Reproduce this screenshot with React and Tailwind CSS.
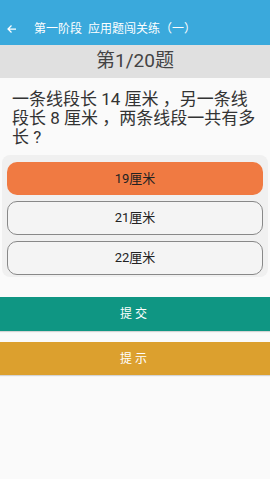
export default function App() {
  const font = { fontFamily: 'Roboto, "Noto Sans CJK SC", sans-serif' };
  return (
    <div className="w-[270px] h-[479px] bg-[#fafafa] flex flex-col" style={font}>
      <div className="h-[45px] bg-[#3aa9dc] flex items-end pb-[8px] pl-[6px]">
        <svg width="12" height="12" viewBox="0 0 24 24" className="mb-[2px]" fill="none" stroke="white" strokeWidth="2.5">
          <path d="M20 12H5M11 5l-7 7 7 7" />
        </svg>
        <span className="ml-[16px] text-white text-[12px] leading-[16px]">第一阶段&nbsp;&nbsp;应用题闯关练（一）</span>
      </div>
      <div className="h-[33px] bg-[#e0e0e0] flex items-center justify-center text-[19px] text-[#444]">第1/20题</div>
      <div className="pl-[12px] w-[262px] pt-[12px] text-[17px] leading-[19px] text-[#333]">
        一条线段长 14 厘米 ，另一条线段长 8 厘米 ，两条线段一共有多长 ?
      </div>
      <div className="mx-[2px] mt-[8px] bg-[#f0f0f0] rounded-[8px] px-[5px] pt-[7px] pb-[2px] flex flex-col gap-[6px]">
        <div className="h-[33px] rounded-[10px] bg-[#f07a42] flex items-center justify-center text-[13px] text-[#222]">19厘米</div>
        <div className="h-[34px] rounded-[10px] border border-[#888] bg-[#f4f4f4] flex items-center justify-center text-[13px] text-[#222]">21厘米</div>
        <div className="h-[34px] rounded-[10px] border border-[#888] bg-[#f4f4f4] flex items-center justify-center text-[13px] text-[#222]">22厘米</div>
      </div>
      <div className="mt-[20px] h-[34px] bg-[#0f9683] flex items-center justify-center text-white text-[12px] tracking-[3px] shadow-[0_1px_1px_rgba(0,0,0,0.15)]">提交</div>
      <div className="mt-[11px] h-[33px] bg-[#dca02e] flex items-center justify-center text-white text-[12px] tracking-[3px] shadow-[0_1px_1px_rgba(0,0,0,0.15)]">提示</div>
    </div>
  );
}
